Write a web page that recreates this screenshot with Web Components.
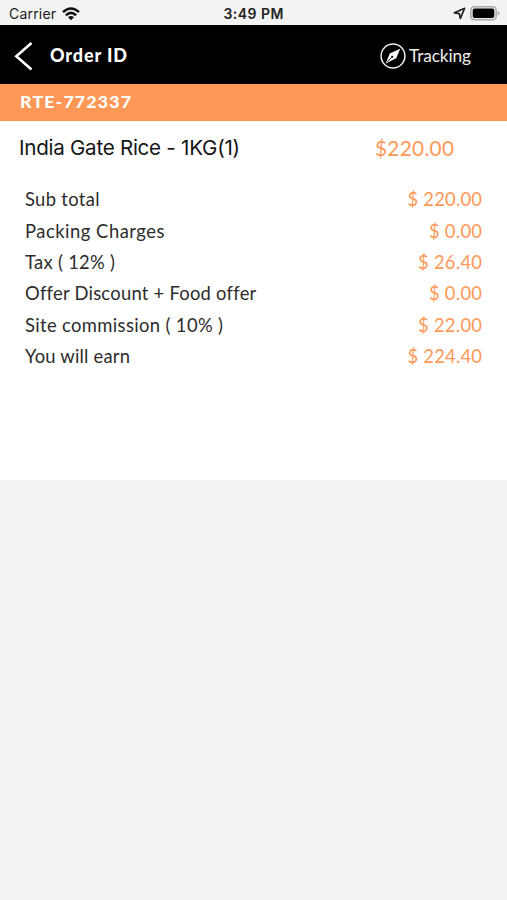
<!DOCTYPE html>
<html lang="en">
<head>
<meta charset="utf-8">
<title>Order</title>
<style>
body { margin: 0; background: #f2f2f2; font-family: Lato, "Liberation Sans", sans-serif; }
</style>
</head>
<body>
<order-screen></order-screen>
<script>
const define = (name, html, ready) => customElements.define(name, class extends HTMLElement {
  connectedCallback() {
    if (this.shadowRoot) return;
    this.attachShadow({ mode: 'open' }).innerHTML = html;
    if (ready) ready(this);
  }
});

/* Text tracked evenly so that it spans the given width. */
define('fit-text', `<style>:host{display:block;white-space:pre;flex:none}span{display:inline-block}</style><span><slot></slot></span>`, el => {
  const span = el.shadowRoot.querySelector('span');
  const target = Number(el.getAttribute('span'));
  const gap = (target - span.getBoundingClientRect().width) / (el.textContent.length - 1);
  span.style.letterSpacing = gap.toFixed(3) + 'px';
  span.style.marginRight = (-gap).toFixed(3) + 'px';
});

define('status-bar', `<style>
:host{display:grid;grid-template-columns:1fr auto 1fr;align-items:center;height:25px;padding:2px 7px 0 9px;box-sizing:border-box;background:#f3f3f3;color:#222;font:14px/20px Inter,sans-serif}
.left,.right{display:flex;align-items:center}.left{gap:6px}.right{justify-content:flex-end;gap:4px}
.time{font-weight:600;margin-right:2px}
svg{display:block}
</style>
<div class="left"><fit-text span="47">Carrier</fit-text>
<svg width="18" height="14" viewBox="0 0 18 14" fill="none" stroke="#111" stroke-width="2.5"><path d="M1 5.1Q9-2.2 17 5.1M3.9 8.2Q9 3.6 14.1 8.2"/><path d="M6 10.2Q9 7.7 12 10.2L9 13.3Z" fill="#111" stroke="none"/></svg></div>
<fit-text class="time" span="60">3:49 PM</fit-text>
<div class="right"><svg width="13" height="13" viewBox="0 0 13 13" fill="none" stroke="#222" stroke-width="1.7" stroke-linejoin="round"><path d="M11.6 1.3 1.4 5.8 6.3 6.6 7.4 11.5Z"/></svg>
<svg width="30" height="15" viewBox="0 0 30 15"><rect x=".8" y=".8" width="25.4" height="13" rx="3.5" fill="#eee" stroke="#aaa" stroke-width="1.5"/><rect x="2.7" y="2.6" width="21.6" height="9.4" rx="2" fill="#000"/><path d="M27.6 5q2 .8 2 2.3t-2 2.3Z" fill="#aaa"/></svg></div>`);

define('nav-bar', `<style>
:host{display:flex;align-items:center;height:59px;padding:2px 36px 0 14px;box-sizing:border-box;background:#000;color:#fff}
.title{margin:-1px 0 0 17px;font-size:18px;font-weight:900;line-height:24px}
.track{display:flex;align-items:center;gap:3px;margin-left:auto;font-size:17.3px;line-height:24px;color:#eee}
.track fit-text{padding-top:1px}
svg{display:block}
</style>
<svg width="19" height="30" viewBox="0 0 19 30" fill="none" stroke="#fff" stroke-width="2.6"><path d="M17.5 2 2.3 15.3 17.5 28.5"/></svg>
<fit-text class="title" span="77">Order ID</fit-text>
<div class="track"><svg width="26" height="26" viewBox="0 0 26 26"><circle cx="13" cy="13" r="11.9" fill="none" stroke="#eee" stroke-width="1.5"/><path d="M20.2 5.8 16.2 15.2 5.8 20.5 9.7 10.5Z" fill="#fff"/><circle cx="12.2" cy="13.8" r="1.1" fill="#000"/><path d="M11.7 14.3 7.5 18.8" stroke="#000" stroke-width=".9"/></svg><fit-text span="62">Tracking</fit-text></div>`);

define('order-banner', `<style>
:host{display:flex;align-items:center;height:36.5px;padding:0 21px 2px 20px;box-sizing:border-box;background:#ff9857;color:#fff;font-size:17.8px;font-weight:900}
</style><fit-text span="111">RTE-772337</fit-text>`);

customElements.define('amount-row', class extends HTMLElement {
  connectedCallback() {
    const g = n => this.getAttribute(n);
    this.attachShadow({ mode: 'open' }).innerHTML = `<style>
:host{display:flex;justify-content:space-between;align-items:center;height:31.4px;font-size:18.4px;line-height:24px;color:#2c2c2c}
.amount{color:#ff9857}
</style><fit-text span="${g('label-span')}">${g('label')}</fit-text><fit-text class="amount" span="${g('amount-span')}">${g('amount')}</fit-text>`;
  }
});

define('order-screen', `<style>
:host{display:block;width:507px;height:900px;overflow:hidden;background:#f2f2f2}
main{height:359.5px;box-sizing:border-box;padding-top:12px;background:#fff}
.item{display:flex;justify-content:space-between;align-items:center;height:31px;padding:0 53px 0 19px;line-height:28px}
.name{font:20.6px/28px Inter,sans-serif;color:#151515}
.price{font-size:20.8px;color:#ff9857}
.rows{padding:20px 25px 0 25px}
</style>
<status-bar></status-bar><nav-bar></nav-bar><order-banner></order-banner>
<main>
<div class="item"><fit-text class="name" span="221">India Gate Rice - 1KG(1)</fit-text><fit-text class="price" span="79">$220.00</fit-text></div>
<div class="rows">
<amount-row label="Sub total" label-span="74.5" amount="$ 220.00" amount-span="74.5"></amount-row>
<amount-row label="Packing Charges" label-span="139.5" amount="$ 0.00" amount-span="53"></amount-row>
<amount-row label="Tax ( 12% )" label-span="90" amount="$ 26.40" amount-span="64"></amount-row>
<amount-row label="Offer Discount + Food offer" label-span="230" amount="$ 0.00" amount-span="53"></amount-row>
<amount-row label="Site commission ( 10% )" label-span="198" amount="$ 22.00" amount-span="64"></amount-row>
<amount-row label="You will earn" label-span="105" amount="$ 224.40" amount-span="74.5"></amount-row>
</div></main>`);
</script>
</body>
</html>
